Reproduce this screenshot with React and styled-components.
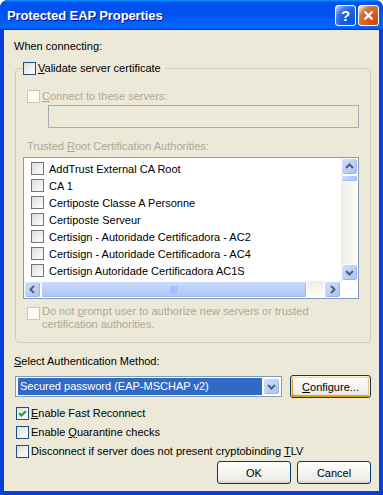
import React from "react";
import styled, { createGlobalStyle } from "styled-components";

const Global = createGlobalStyle`
  html, body {
    margin: 0;
    padding: 0;
    overflow: hidden;
    background: #fff;
  }
  * { box-sizing: border-box; }
`;

const Window = styled.div`
  width: 383px;
  height: 495px;
  display: flex;
  flex-direction: column;
  background: #0a3ed8;
  border-radius: 8px 8px 0 0;
  font-family: "Liberation Sans", Arial, sans-serif;
  font-size: 11px;
  color: #000;
`;

const TitleBar = styled.div`
  height: 30px;
  flex: none;
  display: flex;
  align-items: center;
  gap: 2px;
  padding: 0 4px 0 7px;
  border-radius: 8px 8px 0 0;
  background: linear-gradient(180deg, #0997ff, #0053ee 8%, #0050ee 40%, #0066ff 88%, #0066ff 93%, #005bff 95%, #003dd7 96%, #003dd7);
`;

const Title = styled.div`
  flex: 1;
  color: #fff;
  font-weight: bold;
  font-size: 13px;
  text-shadow: 1px 1px #0f1089;
  letter-spacing: -0.1px;
`;

const CaptionBtn = styled.div`
  width: 21px;
  height: 21px;
  border: 1px solid #fff;
  border-radius: 3px;
  display: flex;
  align-items: center;
  justify-content: center;
  color: #fff;
  font-weight: bold;
  font-size: 15px;
  background: ${(p) =>
    p.$close
      ? "radial-gradient(circle at 90% 90%, #cc4600 0%, #dc6527 55%, #cd7546 70%, #ffccb2 90%, #fff 100%)"
      : "radial-gradient(circle at 90% 90%, #0054e9 0%, #2263d5 55%, #4479e4 70%, #a3bbec 90%, #fff 100%)"};
`;

const Body = styled.div`
  flex: 1;
  margin: 0 4px 4px;
  background: #ece9d8;
  padding: 10px 0 0 10px;
  display: flex;
  flex-direction: column;
  align-items: flex-start;
`;

const Text = styled.div`
  line-height: 13px;
  margin-top: ${(p) => p.$top || 0}px;
  margin-left: ${(p) => p.$left || 0}px;
  color: ${(p) => (p.$disabled ? "#aca899" : "#000")};
  white-space: nowrap;
`;

const Group = styled.fieldset`
  margin: 9px 0 0 1px;
  width: 356px;
  height: 281px;
  padding: 0;
  border: 1px solid #d0d0bf;
  border-radius: 4px;
  display: flex;
  flex-direction: column;
  align-items: flex-start;
`;

const Legend = styled.legend`
  margin-left: 7px;
  padding: 0 4px 0 0;
  line-height: 13px;
`;

const CheckRow = styled.label`
  display: flex;
  align-items: ${(p) => (p.$top ? "flex-start" : "center")};
  gap: ${(p) => (p.$gap === undefined ? 2 : p.$gap)}px;
  line-height: 13px;
  margin-top: ${(p) => p.$mt || 0}px;
  margin-left: ${(p) => p.$ml || 0}px;
  color: ${(p) => (p.$disabled ? "#aca899" : "#000")};
  white-space: nowrap;
`;

const Box = styled.span`
  flex: none;
  width: 13px;
  height: 13px;
  margin-top: ${(p) => p.$mt || 0}px;
  display: flex;
  align-items: center;
  justify-content: center;
  border: 1px solid ${(p) => (p.$disabled ? "#cac8bb" : p.$grey ? "#6f7680" : "#1c5180")};
  background: ${(p) => (p.$disabled ? "#fbfbf8" : "linear-gradient(135deg, #dcdcd7, #ffffff)")};
`;

const TextBox = styled.div`
  margin: 2px 0 0 32px;
  width: 311px;
  height: 23px;
  border: 1px solid #a5acb2;
  background: #ece9d8;
`;

const ListBox = styled.div`
  margin: 4px 0 0 7px;
  width: 336px;
  height: 142px;
  border: 1px solid #7f9db9;
  background: #fff;
  display: grid;
  grid-template-columns: 1fr 17px;
  grid-template-rows: 1fr 17px;
  overflow: hidden;
`;

const Items = styled.div`
  padding-top: 2px;
  overflow: hidden;
`;

const Item = styled.div`
  height: 17px;
  display: flex;
  align-items: center;
  gap: 5px;
  padding-left: 7px;
  white-space: nowrap;
`;

const VScroll = styled.div`
  display: flex;
  flex-direction: column;
  background: linear-gradient(90deg, #eeede5, #fefefb);
`;

const HScroll = styled.div`
  display: flex;
  background: linear-gradient(180deg, #eeede5, #fefefb);
`;

const Corner = styled.div`
  background: #fff;
`;

const ScrollBtn = styled.div`
  flex: none;
  width: 17px;
  height: 17px;
  border: 1px solid #fff;
  border-radius: 3px;
  display: flex;
  align-items: center;
  justify-content: center;
  background: linear-gradient(135deg, #d2defc, #bcd0f8 55%, #a9c0f2);
  box-shadow: inset -1px -1px #9db4ea;
`;

const Thumb = styled.div`
  flex: none;
  width: ${(p) => p.$w || 17}px;
  height: ${(p) => p.$h || 17}px;
  border: 1px solid #fff;
  border-radius: 2px;
  display: flex;
  align-items: center;
  justify-content: center;
  background: linear-gradient(${(p) => (p.$h ? "90deg" : "180deg")}, #cbdafc, #b9cdf8 60%, #aec4f4);
  box-shadow: inset -1px -1px #a3b9ec;
`;

const Track = styled.div`
  flex: 1;
`;

const Select = styled.div`
  margin-left: 1px;
  width: 267px;
  height: 21px;
  border: 1px solid #7f9db9;
  background: #fff;
  display: flex;
  align-items: stretch;
  padding: 1px 1px 1px 2px;
  gap: 1px;
`;

const Selected = styled.div`
  flex: 1;
  background: #316ac5;
  color: #fff;
  line-height: 17px;
  padding-left: 2px;
  white-space: nowrap;
`;

const DropBtn = styled(ScrollBtn)`
  height: 17px;
`;

const ComboRow = styled.div`
  margin-top: 7px;
  display: flex;
  align-items: center;
  gap: 8px;
`;

const Button = styled.button`
  width: ${(p) => p.$w}px;
  height: 23px;
  padding: 0;
  font: inherit;
  color: #000;
  border: 1px solid #003c74;
  border-radius: 3px;
  background: linear-gradient(180deg, #ffffff, #ecebe6 86%, #d6d0c5);
  box-shadow: ${(p) =>
    p.$hot
      ? "inset -1px 1px #fff0cf, inset 1px 2px #fdd889, inset -2px 2px #fbc761, inset 2px -2px #e5a01a"
      : "none"};
`;

const ButtonRow = styled.div`
  align-self: stretch;
  margin: 3px 8px 0 0;
  display: flex;
  justify-content: flex-end;
  gap: 6px;
`;

const Chevron = ({ dir }) => {
  const d = {
    up: "M1 5 L4.5 1.5 L8 5",
    down: "M1 2 L4.5 5.5 L8 2",
    left: "M5 1 L1.5 4.5 L5 8",
    right: "M2 1 L5.5 4.5 L2 8",
  }[dir];
  const vert = dir === "up" || dir === "down";
  return (
    <svg width={vert ? 9 : 7} height={vert ? 7 : 9} viewBox={vert ? "0 0 9 7" : "0 0 7 9"}>
      <path d={d} fill="none" stroke="#4d6185" strokeWidth="2" />
    </svg>
  );
};

const Grip = ({ vertical }) => (
  <svg width={vertical ? 8 : 8} height={vertical ? 8 : 7} viewBox="0 0 8 8">
    {[0, 2, 4, 6].map((x) =>
      vertical ? (
        <rect key={x} x="0" y={x} width="8" height="1" fill="#eef4fe" />
      ) : (
        <rect key={x} x={x} y="0" width="1" height="8" fill="#8cb0f8" />
      )
    )}
  </svg>
);

const Check = ({ checked, disabled, grey, mt }) => (
  <Box $disabled={disabled} $grey={grey} $mt={mt}>
    {checked && (
      <svg width="9" height="9" viewBox="0 0 9 9">
        <path d="M1.2 4.2 L3.5 6.5 L7.8 2.2" fill="none" stroke="#21a121" strokeWidth="2" />
      </svg>
    )}
  </Box>
);

const authorities = [
  "AddTrust External CA Root",
  "CA 1",
  "Certiposte Classe A Personne",
  "Certiposte Serveur",
  "Certisign - Autoridade Certificadora - AC2",
  "Certisign - Autoridade Certificadora - AC4",
  "Certisign Autoridade Certificadora AC1S",
];

export default function App() {
  return (
    <>
      <Global />
      <Window>
        <TitleBar>
          <Title>Protected EAP Properties</Title>
          <CaptionBtn>?</CaptionBtn>
          <CaptionBtn $close>
            <svg width="11" height="11" viewBox="0 0 11 11">
              <path d="M1.5 1.5 L9.5 9.5 M9.5 1.5 L1.5 9.5" stroke="#fff" strokeWidth="2.2" />
            </svg>
          </CaptionBtn>
        </TitleBar>
        <Body>
          <Text>When connecting:</Text>
          <Group>
            <Legend>
              <CheckRow>
                <Check />
                <span>
                  <u>V</u>alidate server certificate
                </span>
              </CheckRow>
            </Legend>
            <CheckRow $mt={15} $ml={11} $disabled>
              <Check disabled />
              <span>
                <u>C</u>onnect to these servers:
              </span>
            </CheckRow>
            <TextBox />
            <Text $top={12} $left={11} $disabled>
              Trusted <u>R</u>oot Certification Authorities:
            </Text>
            <ListBox>
              <Items>
                {authorities.map((name) => (
                  <Item key={name}>
                    <Check grey />
                    <span>{name}</span>
                  </Item>
                ))}
              </Items>
              <VScroll>
                <ScrollBtn>
                  <Chevron dir="up" />
                </ScrollBtn>
                <Thumb $w={17} $h={7} />
                <Track />
                <ScrollBtn>
                  <Chevron dir="down" />
                </ScrollBtn>
              </VScroll>
              <HScroll>
                <ScrollBtn>
                  <Chevron dir="left" />
                </ScrollBtn>
                <Thumb $w={266}>
                  <Grip />
                </Thumb>
                <Track />
                <ScrollBtn>
                  <Chevron dir="right" />
                </ScrollBtn>
              </HScroll>
              <Corner />
            </ListBox>
            <CheckRow $mt={6} $ml={11} $top $disabled>
              <Check disabled mt={2} />
              <span>
                Do not <u>p</u>rompt user to authorize new servers or trusted
                <br />
                certification authorities.
              </span>
            </CheckRow>
          </Group>
          <Text $top={12}>
            <u>S</u>elect Authentication Method:
          </Text>
          <ComboRow>
            <Select>
              <Selected>Secured password (EAP-MSCHAP v2)</Selected>
              <DropBtn>
                <Chevron dir="down" />
              </DropBtn>
            </Select>
            <Button $w={81} $hot>
              <u>C</u>onfigure...
            </Button>
          </ComboRow>
          <CheckRow $mt={9} $ml={2}>
            <Check checked />
            <span>
              <u>E</u>nable Fast Reconnect
            </span>
          </CheckRow>
          <CheckRow $mt={6} $ml={2}>
            <Check />
            <span>
              Enable <u>Q</u>uarantine checks
            </span>
          </CheckRow>
          <CheckRow $mt={6} $ml={2}>
            <Check />
            <span>
              Disconnect if server does not present cryptobinding <u>T</u>LV
            </span>
          </CheckRow>
          <ButtonRow>
            <Button $w={74}>OK</Button>
            <Button $w={74}>Cancel</Button>
          </ButtonRow>
        </Body>
      </Window>
    </>
  );
}
